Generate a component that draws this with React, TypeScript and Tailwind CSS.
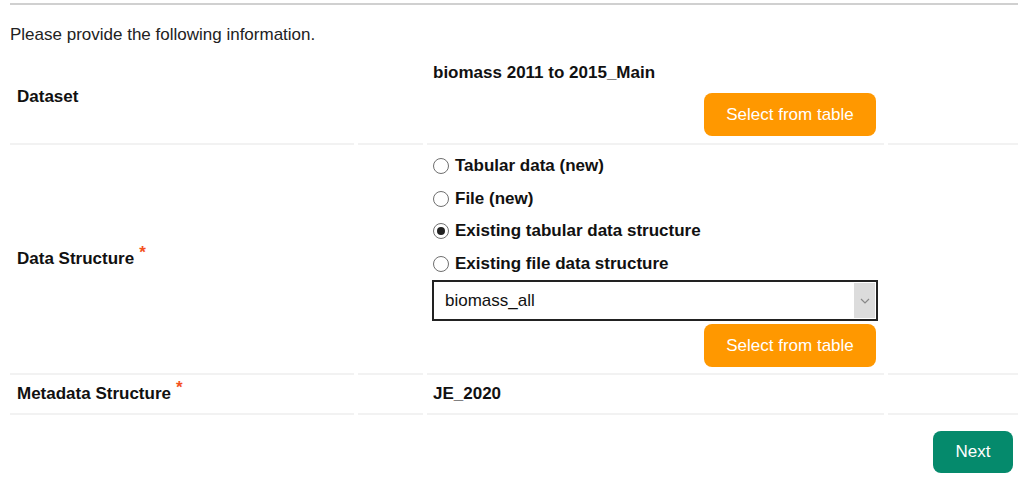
import React from "react";

function Radio({ checked, label }: { checked?: boolean; label: string }) {
  return (
    <div className="flex h-[32.5px] items-center pl-[6px]">
      <span className="flex h-[16px] w-[16px] items-center justify-center rounded-full border border-[#6f6f6f] bg-white">
        {checked && <span className="h-[8px] w-[8px] rounded-full bg-[#222]" />}
      </span>
      <span className="ml-[6px] text-[17px] font-bold leading-[20px] text-[#111]">{label}</span>
    </div>
  );
}

function OrangeButton() {
  return (
    <button className="h-[43px] w-[172px] rounded-[8px] bg-[#ff9800] text-[17px] leading-[20px] text-white">
      Select from table
    </button>
  );
}

function Label({ text, required }: { text: string; required?: boolean }) {
  return (
    <div className="flex items-center border-b-2 border-[#f2f2f2] pl-[7px]">
      <span className="text-[17px] font-bold leading-[20px] text-[#111]">{text}</span>
      {required && (
        <span className="relative -top-[6px] ml-[5px] text-[17px] font-bold leading-[20px] text-[#f4511e]">*</span>
      )}
    </div>
  );
}

const Empty = () => <div className="border-b-2 border-[#f2f2f2]" />;

export default function App() {
  return (
    <div className="min-h-[487px] w-[1024px] bg-white pl-[10px] pr-[6px] pt-[3px] font-['Liberation_Sans',Arial,sans-serif] text-[#111]">
      <div className="h-[2px] w-full bg-[#d0d0d0]" />
      <p className="mt-[20px] text-[17px] leading-[20px] text-[#222]">Please provide the following information.</p>

      <div className="mt-[6px] grid grid-cols-[344px_65px_457px_130px] gap-x-[4px]">
        {/* Row 1 */}
        <Label text="Dataset" />
        <Empty />
        <div className="border-b-2 border-[#f2f2f2] pb-[7px] pl-[6px] pr-[8px] pt-[12px]">
          <div className="text-[17px] font-bold leading-[20px]">biomass 2011 to 2015_Main</div>
          <div className="mt-[10px] flex justify-end">
            <OrangeButton />
          </div>
        </div>
        <Empty />

        {/* Row 2 */}
        <Label text="Data Structure" required />
        <Empty />
        <div className="border-b-2 border-[#f2f2f2] pb-[6px] pr-[8px] pt-[5px]">
          <Radio label="Tabular data (new)" />
          <Radio label="File (new)" />
          <Radio checked label="Existing tabular data structure" />
          <Radio label="Existing file data structure" />
          <div className="ml-[5px] flex h-[41px] w-[446px] items-stretch border-2 border-[#222] bg-white">
            <div className="flex flex-1 items-center pl-[11px] text-[17px] leading-[20px] text-[#111]">biomass_all</div>
            <div className="my-[1px] mr-[1px] flex w-[21px] items-center justify-center bg-[#dcdcdc]">
              <svg width="10" height="6" viewBox="0 0 10 6" fill="none">
                <path d="M1 1l4 4 4-4" stroke="#888" strokeWidth="1.2" />
              </svg>
            </div>
          </div>
          <div className="mt-[3px] flex justify-end">
            <OrangeButton />
          </div>
        </div>
        <Empty />

        {/* Row 3 */}
        <Label text="Metadata Structure" required />
        <Empty />
        <div className="flex h-[40px] items-center border-b-2 border-[#f2f2f2] pl-[6px]">
          <span className="text-[17px] font-bold leading-[20px]">JE_2020</span>
        </div>
        <Empty />
      </div>

      <div className="mt-[16px] flex justify-end pr-[5px]">
        <button className="h-[42px] w-[80px] rounded-[8px] bg-[#058a6c] text-[17px] leading-[20px] text-white">Next</button>
      </div>
    </div>
  );
}
